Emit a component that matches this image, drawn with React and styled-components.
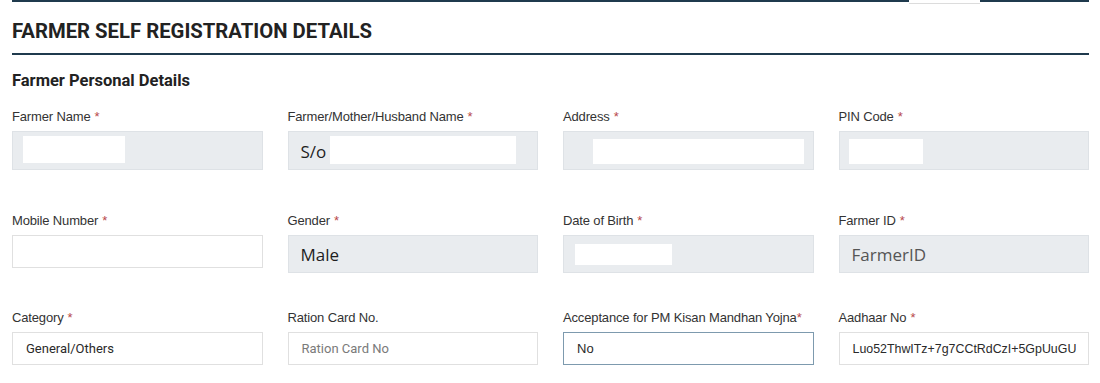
import React from "react";
import styled, { createGlobalStyle } from "styled-components";

const GlobalStyle = createGlobalStyle`
    * { box-sizing: border-box; }
    body {
        margin: 0;
        background: #FFFFFF;
        font-family: "Liberation Sans", Arial, sans-serif;
    }
`

const Page = styled.div`
    width: 1100px;
    padding: 0 11px 0 12px;
`

const TopRule = styled.div`
    display: flex;
    height: 4px;
`

const RuleSegment = styled.div`
    flex: ${(props) => props.$width ? `0 0 ${props.$width}px` : "1"};
    height: 2px;
    background-color: #1F3A4D;
`

const TabGap = styled.div`
    flex: 0 0 71px;
    height: 4px;
    border-bottom: 1px solid #DCDCDC;
`

const Title = styled.h1`
    margin: 0;
    padding: 15px 0 10px 0;
    border-bottom: 2px solid #1F3A4D;
    font-family: Roboto, "Liberation Sans", sans-serif;
    font-weight: 700;
    font-size: 20.3px;
    line-height: 24px;
    color: #222222;
`

const Section = styled.h2`
    margin: 16px 0 0 0;
    font-family: Roboto, "Liberation Sans", sans-serif;
    font-weight: 700;
    font-size: 16.5px;
    line-height: 20px;
    color: #222222;
`

const Row = styled.div`
    display: grid;
    grid-template-columns: repeat(4, minmax(0, 1fr));
    column-gap: 25px;
    align-items: start;
    margin-top: ${(props) => props.$top}px;
`

const Field = styled.div`
    display: flex;
    flex-direction: column;
    gap: 6px;
    min-width: 0;
`

const Label = styled.label`
    font-size: 13px;
    line-height: 16px;
    color: #333333;
    letter-spacing: -0.15px;
    white-space: nowrap;
    span {
        color: #B8474A;
        margin-left: ${(props) => props.$tight ? "0" : "4px"};
    }
`

const Box = styled.div`
    display: flex;
    align-items: ${(props) => props.$align || "center"};
    height: ${(props) => props.$readOnly ? (props.$h || 39) : 33}px;
    padding: 0 12px 0 ${(props) => props.$pad ?? 12}px;
    background-color: ${(props) => props.$readOnly ? "#E9ECEF" : "#FFFFFF"};
    border: 1px solid ${(props) => props.$focus ? "#7D9AAE" : props.$readOnly ? "#DEE2E6" : "#E0E0E0"};
    overflow: hidden;
    white-space: nowrap;
`

const BigValue = styled.span`
    font-family: "Open Sans", "Noto Sans", sans-serif;
    font-size: 17px;
    color: ${(props) => props.$muted ? "#555555" : "#1E1E1E"};
`

const Value = styled.span`
    display: block;
    min-width: 0;
    overflow: hidden;
    font-family: ${(props) => props.$roboto ? 'Roboto, "Liberation Sans", sans-serif' : '"Liberation Sans", Arial, sans-serif'};
    font-size: ${(props) => props.$small ? "12.4px" : "13px"};
    color: ${(props) => props.$placeholder ? "#7A7A7A" : "#2A2A2A"};
    padding-left: 1px;
`

const Mask = styled.span`
    display: block;
    flex: 0 0 auto;
    background-color: #FFFFFF;
    width: ${(props) => props.$w}px;
    height: ${(props) => props.$h}px;
    margin-top: ${(props) => props.$top || 0}px;
    margin-left: ${(props) => props.$left || 0}px;
`

function FormField({ label, required = true, tight, children }) {
    return (
        <Field>
            <Label $tight={tight}>
                {label}
                {required && <span>*</span>}
            </Label>
            {children}
        </Field>
    )
}

export default function App() {
    return (
        <Page>
            <GlobalStyle />
            <TopRule>
                <RuleSegment />
                <TabGap />
                <RuleSegment $width={109} />
            </TopRule>
            <Title>FARMER SELF REGISTRATION DETAILS</Title>
            <Section>Farmer Personal Details</Section>

            <Row $top={18}>
                <FormField label="Farmer Name">
                    <Box $readOnly $align="flex-start" $pad={10}>
                        <Mask $w={102} $h={27} $top={4} />
                    </Box>
                </FormField>
                <FormField label="Farmer/Mother/Husband Name">
                    <Box $readOnly $align="flex-start">
                        <BigValue style={{ marginTop: 8 }}>S/o</BigValue>
                        <Mask $w={186} $h={28} $top={4} $left={4} />
                    </Box>
                </FormField>
                <FormField label="Address">
                    <Box $readOnly $align="flex-start" $pad={29}>
                        <Mask $w={211} $h={25} $top={7} />
                    </Box>
                </FormField>
                <FormField label="PIN Code">
                    <Box $readOnly $align="flex-start" $pad={9}>
                        <Mask $w={74} $h={25} $top={7} />
                    </Box>
                </FormField>
            </Row>

            <Row $top={43}>
                <FormField label="Mobile Number">
                    <Box />
                </FormField>
                <FormField label="Gender">
                    <Box $readOnly $h={38}>
                        <BigValue>Male</BigValue>
                    </Box>
                </FormField>
                <FormField label="Date of Birth">
                    <Box $readOnly $h={38} $align="flex-start" $pad={11}>
                        <Mask $w={97} $h={21} $top={8} />
                    </Box>
                </FormField>
                <FormField label="Farmer ID">
                    <Box $readOnly $h={38}>
                        <BigValue $muted>FarmerID</BigValue>
                    </Box>
                </FormField>
            </Row>

            <Row $top={37}>
                <FormField label="Category">
                    <Box>
                        <Value $roboto>General/Others</Value>
                    </Box>
                </FormField>
                <FormField label="Ration Card No." required={false}>
                    <Box>
                        <Value $roboto $placeholder>Ration Card No</Value>
                    </Box>
                </FormField>
                <FormField label="Acceptance for PM Kisan Mandhan Yojna" tight>
                    <Box $focus>
                        <Value>No</Value>
                    </Box>
                </FormField>
                <FormField label="Aadhaar No">
                    <Box>
                        <Value $small>Luo52ThwITz+7g7CCtRdCzI+5GpUuGUK</Value>
                    </Box>
                </FormField>
            </Row>
        </Page>
    )
}
